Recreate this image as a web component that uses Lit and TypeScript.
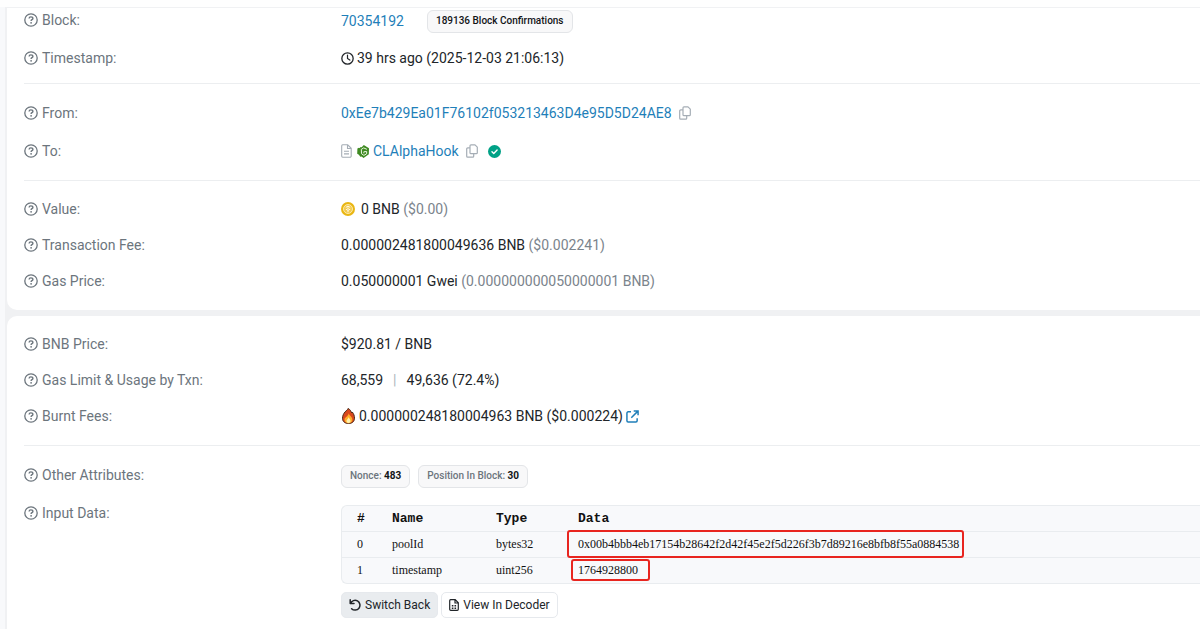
import { LitElement, html, css } from "lit";
import { customElement, property } from "lit/decorators.js";

const helpIcon = html`<svg class="help" viewBox="0 0 14 14" aria-hidden="true">
  <circle cx="7" cy="7" r="6.2" fill="none" stroke="currentColor" stroke-width="1.3" />
  <path d="M5.1 5.500c0-1 .7-1.600 1.800-1.600 1.200 0 2 .6 2 1.600 0 1.200-1.800 1.200-1.800 2.400" fill="none" stroke="currentColor" stroke-width="1.4" />
  <circle cx="7.1" cy="9.8" r=".9" fill="currentColor" />
</svg>`;

const clockIcon = html`<svg class="i13" viewBox="0 0 14 14" aria-hidden="true">
  <circle cx="7" cy="7" r="6.1" fill="none" stroke="currentColor" stroke-width="1.4" />
  <path d="M7 3.300V7l2.500 1.700" fill="none" stroke="currentColor" stroke-width="1.3" stroke-linecap="round" />
</svg>`;

const copyIcon = html`<svg class="copy-icon" viewBox="0 0 12 14" aria-hidden="true">
  <g fill="none" stroke="currentColor" stroke-width="1.2" stroke-linejoin="round">
    <path d="M5 .8h4l2.300 2.300v5.600a1 1 0 0 1-1 1H5a1 1 0 0 1-1-1V1.800a1 1 0 0 1 1-1z" />
    <path d="M3.900 3.900H1.700a1 1 0 0 0-1 1v7.300a1 1 0 0 0 1 1H6.700a1 1 0 0 0 1-1V10" />
  </g>
</svg>`;

const fileIcon = html`<svg class="file-icon" viewBox="0 0 11 14" aria-hidden="true">
  <path d="M1.700.8h5l3.500 3.500v7.700a1.200 1.200 0 0 1-1.200 1.200H1.700a1.200 1.200 0 0 1-1-1.200V2a1.200 1.200 0 0 1 1-1.200zM6.500.8v3.700h3.700M3 7.300h5M3 9.900h5" fill="none" stroke="currentColor" stroke-width="1.100" />
</svg>`;

const hookIcon = html`<svg class="i13" viewBox="0 0 13 13" aria-hidden="true">
  <path d="M6.800 0l5.200 3.200-.2 6L6.600 13 4.500 11.600 3.300 11.800 1.900 9.800.2 8.800.4 3.600 2 2.800 3.200 3.200V1.900L4.700 2.300z" fill="#3f8a22" />
  <path d="M9.900 4.300L6.700 2.900 4.300 4.400l.2 4.300 2.400 1.700 2.700-1.600.1-2.200H7.200M6.900 6.600v1.700" fill="none" stroke="#eef8e4" stroke-width="1" />
</svg>`;

const checkIcon = html`<svg class="i13" viewBox="0 0 14 14" role="img" aria-label="Verified">
  <circle cx="7" cy="7" r="7" fill="#00a186" />
  <path d="M4.300 7.200l1.900 1.900 3.600-3.800" fill="none" stroke="#fff" stroke-width="1.500" stroke-linecap="round" stroke-linejoin="round" />
</svg>`;

const coinIcon = html`<svg class="help" viewBox="0 0 14 14" aria-hidden="true">
  <circle cx="7" cy="7" r="7" fill="#e9b613" />
  <circle cx="7" cy="7" r="4.500" fill="#f3c94d" stroke="#fff3c4" stroke-width=".8" />
  <path d="M4.800 5.400L7 4.200l2.200 1.200M4.800 7.200L7 8.300l2.200-1.100M7 8.300v1.900" fill="none" stroke="#fffbe6" stroke-width="1" />
  <path d="M7 5.400l1.200.7L7 6.900l-1.200-.8z" fill="#fffbe6" />
</svg>`;

const fireIcon = html`<svg class="fire-icon" viewBox="0 0 13 16" aria-hidden="true">
  <path d="M6 .5C8.600 1.600 8.900 3.400 9.700 4.900l.6-.9c1.500 1.900 2.200 3.900 2.200 6.200 0 3.300-2.400 5.300-6 5.300S.5 13.500.5 10.300C.5 7.700 1.600 5.600 3 3.900 4.200 2.700 5.500 2 6 .5z" fill="#d9481c" stroke="#4d2a17" stroke-width="1" />
  <path d="M6.700 5.300c.4 2.200 3.700 3.700 3.700 6.400 0 2.200-1.600 3.500-3.900 3.500S2.500 14 2.500 11.700c0-2.400 3.600-3 4.200-6.400z" fill="#ffae2b" />
  <path d="M6.600 9.300c.5 1.200 1.900 2.200 1.900 3.600 0 1.300-.8 2-2 2s-2-.7-2-2c0-1.300 1.800-2.100 2.100-3.600z" fill="#fff3b0" />
</svg>`;

const externalIcon = html`<svg class="i13" viewBox="0 0 14 14" aria-hidden="true">
  <path d="M5.400 2H2.300A1.300 1.300 0 0 0 1 3.300v8.400A1.300 1.300 0 0 0 2.300 13h8.400a1.300 1.300 0 0 0 1.300-1.300V9M8.300 1H13v4.700M12.800 1.200L5.700 8.300" fill="none" stroke="currentColor" stroke-width="1.600" />
</svg>`;

const undoIcon = html`<svg class="i12" viewBox="0 0 12 12" aria-hidden="true">
  <path d="M1.200.8v3.800H5M1.500 4.400A4.900 4.900 0 1 1 2.600 9.700" fill="none" stroke="currentColor" stroke-width="1.500" stroke-linecap="round" stroke-linejoin="round" />
</svg>`;

const decoderIcon = html`<svg class="decoder-icon" viewBox="0 0 10 12" aria-hidden="true">
  <path d="M1.600.7h4.600l3.100 3.100v6.500a1 1 0 0 1-1 1H1.700a1 1 0 0 1-1-1V1.700a1 1 0 0 1 .9-1zM6 .8v3.200h3.200" fill="none" stroke="currentColor" stroke-width="1.200" />
  <path d="M2.800 6h1.600v1.500H2.800zM5.500 6h1.600v1.500H5.500zM2.800 8.500h1.600V10H2.800zM5.500 8.500h1.600V10H5.500z" fill="currentColor" />
</svg>`;

@customElement("detail-row")
class DetailRow extends LitElement {
  @property() label = "";

  static styles = css`
    :host {
      display: grid;
      grid-template-columns: minmax(150px, 317px) minmax(0, 1fr);
      align-items: start;
      line-height: 24px;
    }
    .label {
      display: flex;
      align-items: center;
      gap: 4px;
      color: #6c757d;
    }
    .help {
      width: 14px;
      height: 14px;
      flex: none;
    }
    .value {
      min-width: 0;
    }
  `;

  render() {
    return html`
      <div class="label">${helpIcon}<span>${this.label}</span></div>
      <div class="value"><slot></slot></div>
    `;
  }
}

interface Param {
  name: string;
  type: string;
  data: string;
  mark: string;
}

const params: Param[] = [
  {
    name: "poolId",
    type: "bytes32",
    data: "0x00b4bbb4eb17154b28642f2d42f45e2f5d226f3b7d89216e8bfb8f55a0884538",
    mark: "mark wide",
  },
  { name: "timestamp", type: "uint256", data: "1764928800", mark: "mark" },
];

@customElement("app-root")
class AppRoot extends LitElement {
  static styles = css`
    :host {
      display: flex;
      flex-direction: column;
      gap: 6px;
      min-height: 100vh;
      box-sizing: border-box;
      padding: 8px 0 0 7px;
      overflow: hidden;
      background:
        linear-gradient(#fefefe, #fefefe) 0 0 / 100% 7px no-repeat,
        linear-gradient(90deg, #f8f9fb 5px, #f0f1f3 5px);
      color: #212529;
      font: 14px/24px Roboto, sans-serif;
    }
    .card {
      background: #fff;
      padding-left: 17px;
    }
    .overview {
      border-radius: 0 0 0 10px;
    }
    .more {
      flex: 1;
      border-radius: 10px 0 0 0;
    }
    .group {
      display: flex;
      flex-direction: column;
      gap: 12px;
      padding: 16px 0 17px;
    }
    .group.loose {
      gap: 14px;
      padding-top: 17px;
    }
    .group.first {
      padding: 0 0 13px;
    }
    .group + .group {
      border-top: 1px solid #eceef0;
    }
    .line {
      display: flex;
      align-items: center;
      gap: 3px;
      min-height: 24px;
    }
    .line.spaced {
      gap: 8px;
    }
    .line.badges {
      padding-top: 2px;
      min-height: 22px;
      line-height: 22px;
    }
    .block {
      margin-right: 20px;
    }
    a {
      color: #1f7fb9;
      text-decoration: none;
    }
    .ext {
      display: flex;
    }
    .muted {
      color: #7b848c;
    }
    .bar {
      color: #adb5bd;
      margin: 0 10px;
    }
    .badge {
      box-sizing: border-box;
      height: 23px;
      margin-bottom: -1px;
      padding: 0 8px;
      border: 1px solid #e3e5e8;
      border-radius: 6px;
      background: #f8f8f9;
      font-size: 10px;
      font-weight: 500;
      line-height: 20px;
      color: #111417;
      white-space: nowrap;
    }
    .badge .key {
      color: #6c757d;
    }
    .badge strong {
      font-weight: 700;
    }
    .copy {
      display: flex;
      padding: 0;
      border: 0;
      background: none;
      color: #a5adb5;
      margin: 0 4px;
    }
    .help {
      width: 14px;
      height: 14px;
      margin-right: 3px;
    }
    .i13 {
      width: 13px;
      height: 13px;
    }
    .i12 {
      width: 12px;
      height: 12px;
    }
    .copy-icon {
      width: 12px;
      height: 14px;
    }
    .file-icon {
      width: 11px;
      height: 14px;
      color: #a5adb5;
      margin-right: 2px;
    }
    .fire-icon {
      width: 13px;
      height: 16px;
      margin: 0 1px;
    }
    .decoder-icon {
      width: 10px;
      height: 12px;
    }
    .panel {
      margin-top: 4px;
      border: 1px solid #e9ecef;
      border-right: 0;
      border-radius: 6px 0 0 6px;
      background: #f8f9fb;
      overflow: hidden;
    }
    table {
      width: 100%;
      border-collapse: collapse;
      font: 12px/25px "Liberation Serif", serif;
      color: #111;
    }
    th,
    td {
      padding: 0;
      text-align: left;
      white-space: nowrap;
      height: 25px;
    }
    th {
      font: bold 13px/25px "Liberation Mono", monospace;
    }
    td {
      border-top: 1px solid #e9ecef;
    }
    .num {
      width: 35px;
      padding-left: 15px;
    }
    .name {
      width: 104px;
    }
    .type {
      width: 82px;
    }
    .mark {
      position: relative;
    }
    .mark::after {
      content: "";
      position: absolute;
      inset: -4px -12px -4px -7px;
      border: 2px solid #e8251f;
      border-radius: 3px;
    }
    .mark.wide::after {
      inset: -7px -5px -7px -11px;
    }
    .actions {
      display: flex;
      gap: 3px;
      margin-top: 8px;
    }
    .btn {
      display: flex;
      align-items: center;
      gap: 4px;
      height: 26px;
      padding: 0 7px;
      border: 1px solid #e6e9ed;
      border-radius: 5px;
      background: #fff;
      color: #212529;
      font: 12px/24px Roboto, sans-serif;
    }
    .btn.active {
      background: #e9ecef;
    }
  `;

  private copy(what: string) {
    return html`<button class="copy" type="button" aria-label="Copy ${what}">${copyIcon}</button>`;
  }

  render() {
    return html`
      <section class="card overview">
        <div class="group loose first">
          <detail-row label="Block:">
            <div class="line badges">
              <a class="block" href="#block">70354192</a>
              <span class="badge">189136 Block Confirmations</span>
            </div>
          </detail-row>
          <detail-row label="Timestamp:">
            <div class="line">${clockIcon}<span>39 hrs ago (2025-12-03 21:06:13)</span></div>
          </detail-row>
        </div>
        <div class="group loose">
          <detail-row label="From:">
            <div class="line">
              <a href="#from">0xEe7b429Ea01F76102f053213463D4e95D5D24AE8</a>${this.copy("sender address")}
            </div>
          </detail-row>
          <detail-row label="To:">
            <div class="line">
              ${fileIcon}${hookIcon}<a href="#to">CLAlphaHook</a>${this.copy("contract address")}
              <span></span>${checkIcon}
            </div>
          </detail-row>
        </div>
        <div class="group">
          <detail-row label="Value:">
            <div class="line">${coinIcon}<span>0 BNB <span class="muted">($0.00)</span></span></div>
          </detail-row>
          <detail-row label="Transaction Fee:">
            0.000002481800049636 BNB <span class="muted">($0.002241)</span>
          </detail-row>
          <detail-row label="Gas Price:">
            0.050000001 Gwei <span class="muted">(0.000000000050000001 BNB)</span>
          </detail-row>
        </div>
      </section>

      <section class="card more">
        <div class="group">
          <detail-row label="BNB Price:">$920.81 / BNB</detail-row>
          <detail-row label="Gas Limit &amp; Usage by Txn:">
            68,559<span class="bar">|</span>49,636 (72.4%)
          </detail-row>
          <detail-row label="Burnt Fees:">
            <div class="line">
              ${fireIcon}<span>0.000000248180004963 BNB ($0.000224)</span>
              <a class="ext" href="#burnt" aria-label="Burnt fees details">${externalIcon}</a>
            </div>
          </detail-row>
        </div>
        <div class="group loose">
          <detail-row label="Other Attributes:">
            <div class="line spaced badges">
              <span class="badge"><span class="key">Nonce:</span> <strong>483</strong></span>
              <span class="badge"><span class="key">Position In Block:</span> <strong>30</strong></span>
            </div>
          </detail-row>
          <detail-row label="Input Data:">
            <div class="panel">
              <table>
                <thead>
                  <tr>
                    <th class="num">#</th>
                    <th class="name">Name</th>
                    <th class="type">Type</th>
                    <th>Data</th>
                  </tr>
                </thead>
                <tbody>
                  ${params.map(
                    (p, i) => html`<tr>
                      <td class="num">${i}</td>
                      <td>${p.name}</td>
                      <td>${p.type}</td>
                      <td><span class=${p.mark}>${p.data}</span></td>
                    </tr>`
                  )}
                </tbody>
              </table>
            </div>
            <div class="actions">
              <button class="btn active" type="button">${undoIcon}Switch Back</button>
              <button class="btn" type="button">${decoderIcon}View In Decoder</button>
            </div>
          </detail-row>
        </div>
      </section>
    `;
  }
}
